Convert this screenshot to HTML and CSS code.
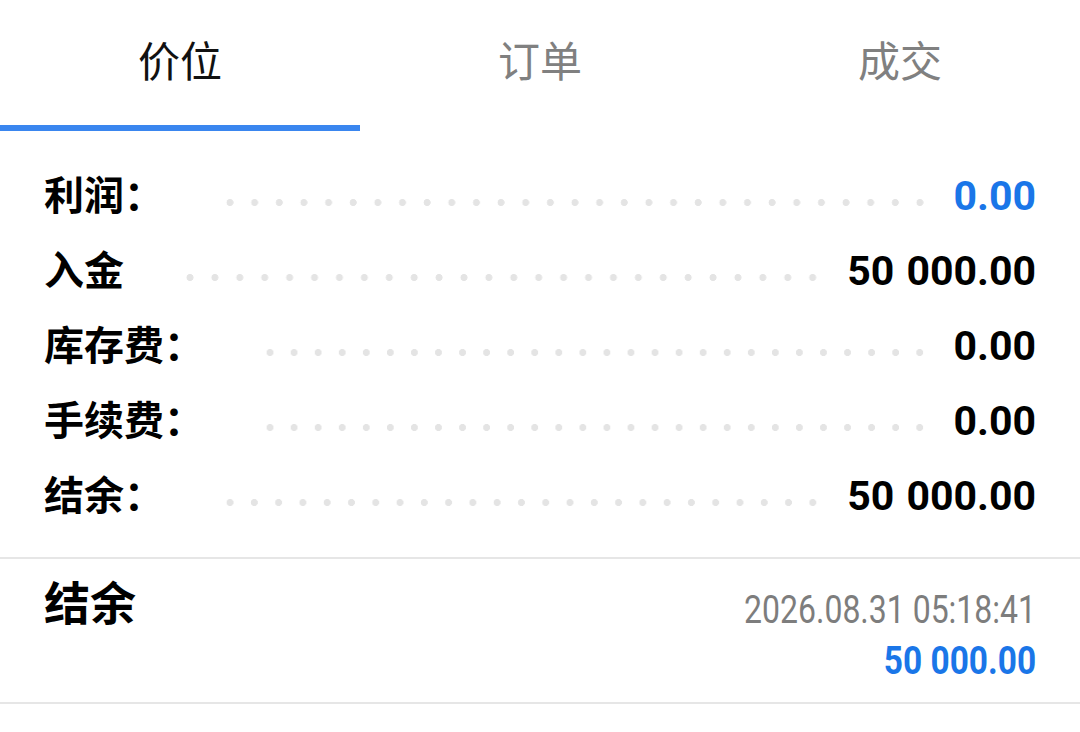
FILE: index.html
```html
<!DOCTYPE html>
<html lang="zh-CN">
<head>
<meta charset="utf-8">
<title>价位</title>
<link rel="stylesheet" href="styles.css">
</head>
<body>
<div class="tabs">
  <div class="tab active">价位</div>
  <div class="tab">订单</div>
  <div class="tab">成交</div>
</div>
<div class="summary">
  <div class="row"><span class="label">利润：</span><span class="dots"></span><span class="value blue">0.00</span></div>
  <div class="row"><span class="label">入金</span><span class="dots"></span><span class="value">50 000.00</span></div>
  <div class="row"><span class="label">库存费：</span><span class="dots"></span><span class="value">0.00</span></div>
  <div class="row"><span class="label">手续费：</span><span class="dots"></span><span class="value">0.00</span></div>
  <div class="row"><span class="label">结余：</span><span class="dots"></span><span class="value">50 000.00</span></div>
</div>
<div class="balance">
  <div class="balance-title">结余</div>
  <div class="balance-info">
    <span class="date">2026.08.31 05:18:41</span>
    <span class="amount">50 000.00</span>
  </div>
</div>
</body>
</html>
```

FILE: styles.css
```css
html, body {
  margin: 0;
  padding: 0;
  background: #ffffff;
}
body {
  font-family: Roboto, "Noto Sans CJK SC", sans-serif;
  color: #000000;
}
.tabs {
  display: flex;
  height: 131px;
}
.tab {
  flex: 1;
  display: flex;
  align-items: center;
  justify-content: center;
  box-sizing: border-box;
  padding-bottom: 9px;
  border-bottom: 6px solid transparent;
  font-size: 42px;
  color: #808080;
}
.tab.active {
  color: #111111;
  border-bottom-color: #3a86ef;
}
.summary {
  padding: 27px 44px 24px;
  border-bottom: 2px solid #e6e6e6;
}
.row {
  display: flex;
  align-items: center;
  height: 75px;
}
.label {
  margin-bottom: 6px;
  font-size: 40px;
  font-weight: 700;
  white-space: nowrap;
}
.dots {
  flex: 1;
  height: 7px;
  margin: 13px 22px 0 54px;
  background-image: radial-gradient(circle at 12px 3.5px, #e4e4e4 3.2px, transparent 3.8px);
  background-size: 24px 7px;
  background-repeat: space no-repeat;
}
.value {
  font-size: 41px;
  font-weight: 700;
  word-spacing: 2px;
  white-space: nowrap;
}
.blue {
  color: #1a76e8;
}
.balance {
  display: flex;
  justify-content: space-between;
  align-items: flex-start;
  height: 143px;
  padding: 0 44px;
  border-bottom: 2px solid #e6e6e6;
}
.balance-title {
  margin-top: 17px;
  font-size: 46px;
  line-height: 56px;
  font-weight: 700;
}
.balance-info {
  margin-top: 26px;
  display: flex;
  flex-direction: column;
  align-items: flex-end;
}
.date {
  display: inline-block;
  font-size: 39px;
  line-height: 51px;
  color: #7d7d7d;
  transform: scaleX(0.82);
  transform-origin: right center;
}
.amount {
  display: inline-block;
  font-size: 38px;
  line-height: 51px;
  font-weight: 700;
  color: #1a76e8;
  transform: scaleX(0.88);
  transform-origin: right center;
}
```
